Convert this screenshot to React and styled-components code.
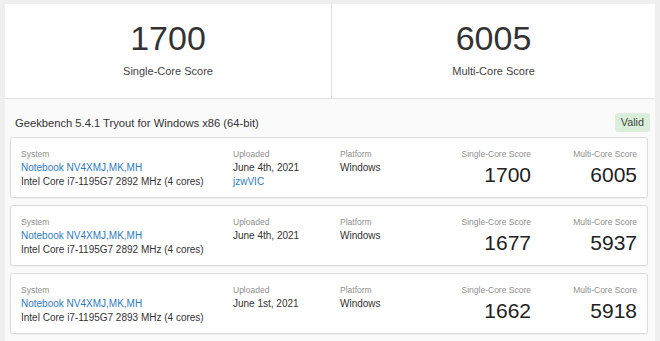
import React from "react";
import styled, { createGlobalStyle } from "styled-components";

const GlobalStyle = createGlobalStyle`
  html, body {
    margin: 0;
    padding: 0;
    background: #efefef;
    font-family: "Liberation Sans", Arial, sans-serif;
    color: #333;
  }
`;

const Page = styled.div`
  padding: 4px 5px 0 5px;
  width: 650px;
`;

const ScoreBoard = styled.div`
  display: grid;
  grid-template-columns: 326px 1fr;
  background: #fff;
  border-bottom: 1px solid #e2e2e2;
  height: 94px;
`;

const ScoreCell = styled.div`
  text-align: center;
  padding-top: 14px;
  border-left: ${(p) => (p.$divider ? "1px solid #e2e2e2" : "none")};
`;

const BigScore = styled.div`
  font-size: 34px;
  line-height: 40px;
  color: #333;
`;

const ScoreLabel = styled.div`
  margin-top: 6px;
  font-size: 11px;
  line-height: 14px;
  color: #444;
`;

const Section = styled.div`
  background: #fafafa;
  padding-bottom: 8px;
`;

const Header = styled.div`
  display: flex;
  align-items: center;
  justify-content: space-between;
  padding: 14px 5px 5px 10px;
`;

const Title = styled.div`
  font-size: 11.2px;
  color: #333;
`;

const Badge = styled.div`
  background: #dbeedb;
  color: #3b4a3b;
  font-size: 10.8px;
  height: 19px;
  line-height: 19px;
  padding: 0 6px;
  border-radius: 3px;
`;

const CardList = styled.div`
  display: flex;
  flex-direction: column;
  gap: 7px;
  padding: 0 7px 0 5px;
`;

const Card = styled.div`
  box-sizing: border-box;
  height: 61px;
  background: #fff;
  border: 1px solid #dcdcdc;
  border-radius: 3px;
  box-shadow: 0 1px 1px rgba(0, 0, 0, 0.04);
  padding: 9px 10px 0 10px;
  display: grid;
  grid-template-columns: 212px 107px 1fr 110px 106px;
`;

const Col = styled.div`
  text-align: ${(p) => (p.$right ? "right" : "left")};
`;

const Label = styled.div`
  font-size: 8.5px;
  line-height: 14px;
  color: #8f8f8f;
`;

const Line = styled.div`
  font-size: 10px;
  line-height: 14px;
  color: ${(p) => (p.$link ? "#2f7bbf" : "#333")};
  white-space: nowrap;
`;

const CardScore = styled.div`
  margin-top: 3px;
  font-size: 21px;
  line-height: 22px;
  color: #222;
`;

const results = [
  { cpu: "Intel Core i7-1195G7 2892 MHz (4 cores)", date: "June 4th, 2021", user: "jzwVIC", single: 1700, multi: 6005 },
  { cpu: "Intel Core i7-1195G7 2892 MHz (4 cores)", date: "June 4th, 2021", single: 1677, multi: 5937 },
  { cpu: "Intel Core i7-1195G7 2893 MHz (4 cores)", date: "June 1st, 2021", single: 1662, multi: 5918 },
];

function ResultCard({ r }) {
  return (
    <Card>
      <Col>
        <Label>System</Label>
        <Line $link>Notebook NV4XMJ,MK,MH</Line>
        <Line>{r.cpu}</Line>
      </Col>
      <Col>
        <Label>Uploaded</Label>
        <Line>{r.date}</Line>
        {r.user && <Line $link>{r.user}</Line>}
      </Col>
      <Col>
        <Label>Platform</Label>
        <Line>Windows</Line>
      </Col>
      <Col $right>
        <Label>Single-Core Score</Label>
        <CardScore>{r.single}</CardScore>
      </Col>
      <Col $right>
        <Label>Multi-Core Score</Label>
        <CardScore>{r.multi}</CardScore>
      </Col>
    </Card>
  );
}

export default function App() {
  return (
    <Page>
      <GlobalStyle />
      <ScoreBoard>
        <ScoreCell>
          <BigScore>1700</BigScore>
          <ScoreLabel>Single-Core Score</ScoreLabel>
        </ScoreCell>
        <ScoreCell $divider>
          <BigScore>6005</BigScore>
          <ScoreLabel>Multi-Core Score</ScoreLabel>
        </ScoreCell>
      </ScoreBoard>
      <Section>
        <Header>
          <Title>Geekbench 5.4.1 Tryout for Windows x86 (64-bit)</Title>
          <Badge>Valid</Badge>
        </Header>
        <CardList>
          {results.map((r, i) => (
            <ResultCard key={i} r={r} />
          ))}
        </CardList>
      </Section>
    </Page>
  );
}
